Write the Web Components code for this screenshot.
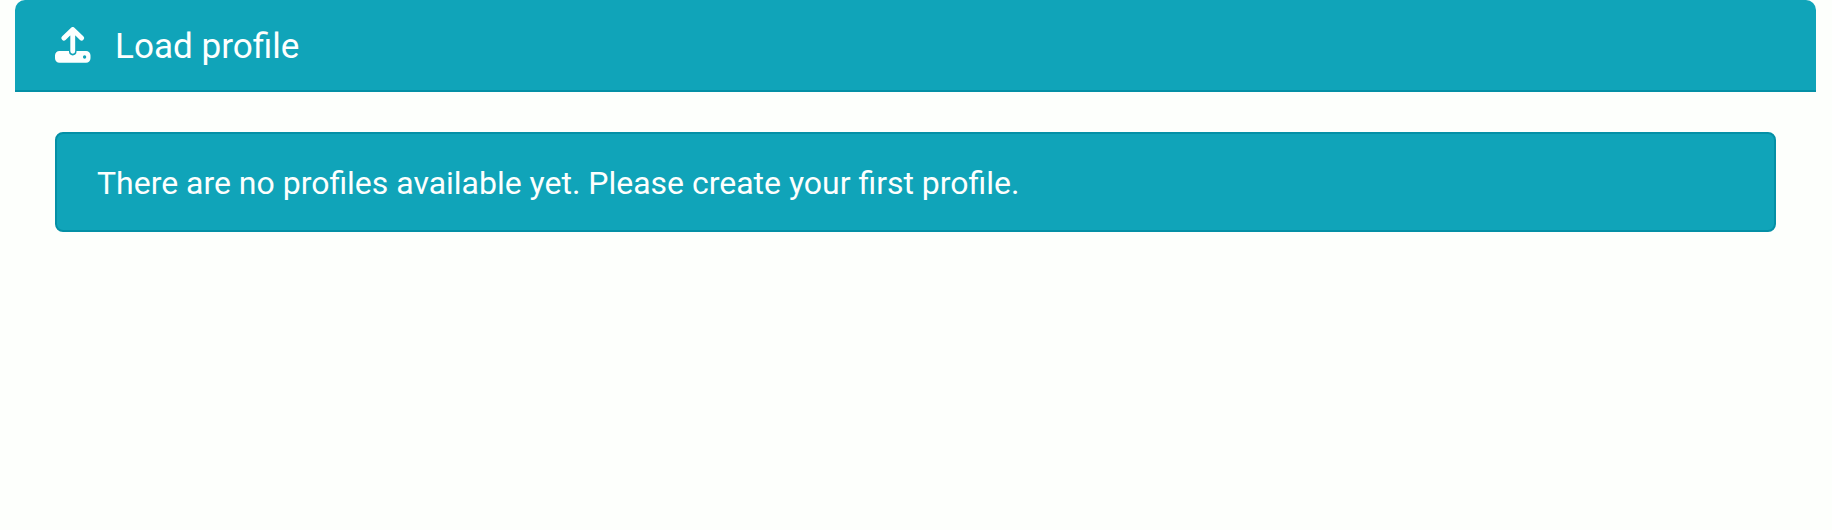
<!DOCTYPE html>
<html lang="en">
<head>
<meta charset="utf-8">
<title>Load profile</title>
<style>
html, body { margin: 0; background: #fdfffc; }
body { font-family: Roboto, sans-serif; color: #fdfffe; }
</style>
</head>
<body>
<profile-panel>
  <panel-header slot="header"><upload-icon slot="icon"></upload-icon>Load profile</panel-header>
  <info-alert>There are no profiles available yet. Please create your first profile.</info-alert>
</profile-panel>
<script>
const define = (name, html) => customElements.define(name, class extends HTMLElement {
  constructor() {
    super();
    this.attachShadow({ mode: 'open' }).innerHTML = html;
  }
});

define('profile-panel', `
<style>
:host { display: block; margin: 0 16.4px 0 15px; }
.body { padding: 40px; }
</style>
<slot name="header"></slot>
<div class="body"><slot></slot></div>`);

define('panel-header', `
<style>
:host { display: flex; align-items: center; gap: 24.6px; box-sizing: border-box; height: 92.3px; padding: 0 40px;
  background: #10a4b9; border-bottom: 2px solid #0490a6; border-radius: 10px 10px 0 0;
  font-size: 35.1px; line-height: 42px; }
.title { display: block; padding-top: 2px; }
</style>
<slot name="icon"></slot><span class="title"><slot></slot></span>`);

define('upload-icon', `
<style>
:host { display: block; width: 35.5px; height: 36px; }
svg { display: block; width: 35.5px; height: 36px; }
</style>
<svg viewBox="0 0 512 512" preserveAspectRatio="none"><path d="M128 158L256 36L384 158M256 40V346" fill="none" stroke="currentColor" stroke-width="70" stroke-linecap="round" stroke-linejoin="round"/><path fill="currentColor" fill-rule="evenodd" d="M64 340H202V350a54 54 0 0 0 108 0V340H448a64 64 0 0 1 64 64v40a64 64 0 0 1-64 64H64a64 64 0 0 1-64-64v-40a64 64 0 0 1 64-64zM427 402a24 24 0 1 0 0 48a24 24 0 1 0 0-48z"/></svg>`);

define('info-alert', `
<style>
:host { display: flex; align-items: center; box-sizing: border-box; height: 99.5px; padding: 2px 40px 0;
  background: #10a4b9; border: 2px solid #0490a6; border-radius: 8px;
  font-size: 31.98px; line-height: 48px; }
</style>
<span><slot></slot></span>`);
</script>
</body>
</html>
